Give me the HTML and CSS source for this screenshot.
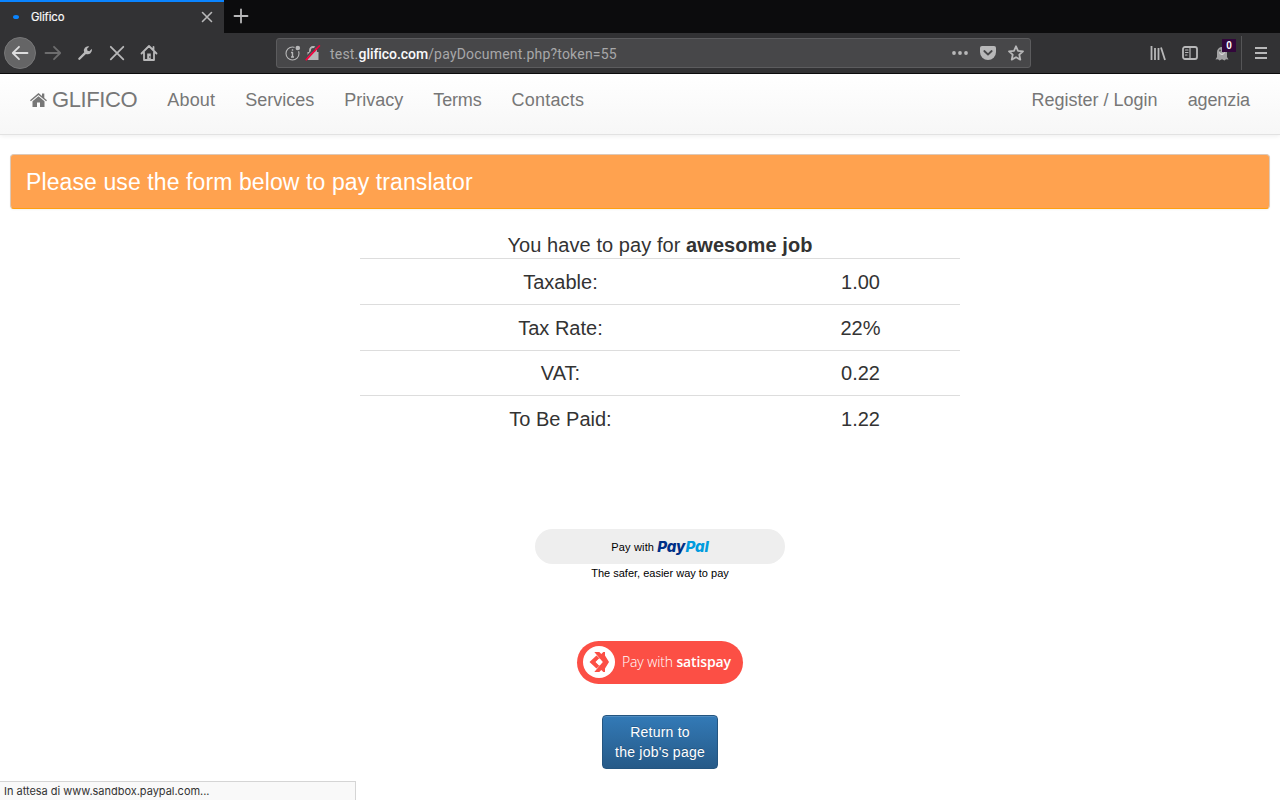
FILE: index.html
```html
<!DOCTYPE html>
<html lang="it">
<head>
<meta charset="utf-8">
<title>Glifico</title>
<link rel="stylesheet" href="styles.css">
</head>
<body>
<header class="browser">
  <div class="tabs">
    <div class="tab">
      <span class="loader"></span>
      <span class="tab-title">Glifico</span>
      <svg class="tab-close" width="12" height="12" viewBox="0 0 12 12"><path d="M1.5 1.5l9 9m0-9l-9 9"/></svg>
    </div>
    <svg class="tab-new" width="16" height="16" viewBox="0 0 16 16"><path d="M8 1.500v13M1.500 8h13"/></svg>
  </div>
  <div class="toolbar">
    <div class="tools">
      <span class="back"><svg width="18" height="18" viewBox="0 0 18 18"><path d="M16.500 9H2M8 2.800L1.800 9 8 15.200"/></svg></span>
      <svg class="dim" width="18" height="18" viewBox="0 0 18 18"><path d="M1.500 9H16M10 2.800L16.200 9 10 15.200"/></svg>
      <svg width="16" height="16" viewBox="0 0 16 16"><path class="fill" d="M1.300 13.200l5.900-5.900A4.300 4.300 0 0 1 12.300 1.400L10 3.800l.5 1.900 1.900.5 2.400-2.400a4.300 4.300 0 0 1-5.900 5.100l-6 5.900a1.200 1.200 0 0 1-1.600-1.600z"/></svg>
      <svg width="16" height="16" viewBox="0 0 16 16"><path d="M1.800 1.800l12.500 12.500m0-12.500L1.800 14.300"/></svg>
      <svg width="18" height="18" viewBox="0 0 18 18"><path d="M1.500 9.500L9 2l7.500 7.500M4 8.500V16h10V8.500M13.500 3v3"/><path class="fill" d="M7.200 9.500h3.600V16H7.200z"/><circle class="hub" cx="9.800" cy="13" r=".8"/></svg>
    </div>
    <div class="address">
      <svg width="16" height="16" viewBox="0 0 16 16"><circle class="ring" cx="7.500" cy="8.500" r="6.500"/><circle class="gap" cx="12.800" cy="3" r="3.400"/><circle class="fill" cx="12.800" cy="3" r="2.300"/><path class="letter" d="M6 7.500h1.500V12M6 12h3M7.500 4.300v1.400"/></svg>
      <svg width="16" height="16" viewBox="0 0 16 16"><path d="M5 8V5a3 3 0 0 1 6 0v3"/><path class="fill" d="M2.500 7H13.500v8h-11z"/><path class="dark" d="M0 13.500L13 0"/><path class="red" d="M1.300 14.700L14.300 1"/></svg>
      <span class="url">test.<b>glifico.com</b>/payDocument.php?token=55</span>
      <div class="page-actions">
        <svg width="16" height="16" viewBox="0 0 16 16"><g class="fill"><circle cx="2" cy="8" r="1.900"/><circle cx="8" cy="8" r="1.900"/><circle cx="14" cy="8" r="1.900"/></g></svg>
        <svg width="16" height="16" viewBox="0 0 16 16"><path class="fill" d="M2 1h12a2 2 0 0 1 2 2v4a8 8 0 0 1-16 0V3a2 2 0 0 1 2-2z"/><path class="pocket" d="M4.300 6L8 9.500 11.700 6"/></svg>
        <svg width="16" height="16" viewBox="0 0 16 16"><path d="M8 1.300l2 4.500 5 .5-3.700 3.400 1 4.900L8 12.200l-4.300 2.400 1-4.900L1 6.300l5-.5z"/></svg>
      </div>
    </div>
    <div class="extras">
      <svg width="16" height="16" viewBox="0 0 16 16"><path class="books" d="M1.500 1v14M5 3v12M8.500 3v12M11 2.500l4 12.500"/></svg>
      <svg width="16" height="16" viewBox="0 0 16 16"><rect x="1" y="2" width="14" height="12" rx="2"/><path class="thin" d="M8 2v12"/><path class="thin" d="M3.500 5h2.500M3.500 7.500h2.500M3.500 10h1.500"/></svg>
      <div class="ghost">
        <svg width="14" height="16" viewBox="0 0 14 16"><path class="ghost-body" d="M2 12V7a5 5 0 0 1 10 0v5l1.500 2.500-2.500-.3-1.500 1.300L7 14.200l-2.500 1.300L3 14.200l-2.500.3z"/><circle cx="5" cy="5.500" r="1" class="eye"/><circle cx="9" cy="5.500" r="1" class="eye"/><path class="smile" d="M4.500 8q2.500 3 5 0"/></svg>
        <span class="badge">0</span>
      </div>
      <span class="divider"></span>
      <svg class="menu" width="12" height="14" viewBox="0 0 12 14"><path d="M0 2h12M0 7h12M0 12h12"/></svg>
    </div>
  </div>
</header>
<nav class="nav">
  <a class="brand"><svg width="17" height="14" viewBox="0 0 17 14"><path d="M0 7.200L8.500 0 12 3V.5h2.300v4.400L17 7.200l-.9 1L8.500 2 .9 8.200z"/><path d="M2.500 8.200l6-4.900 6 4.900V14H10V9.500H7V14H2.500z"/></svg><span>GLIFICO</span></a>
  <a class="wide">About</a><a>Services</a><a>Privacy</a><a class="tight">Terms</a><a class="wide">Contacts</a>
  <a class="login">Register / Login</a><a class="agency">agenzia</a>
</nav>
<main>
  <div class="notice">Please use the form below to pay translator</div>
  <section class="payment">
    <p class="lead">You have to pay for <b>awesome job</b></p>
    <table class="amounts">
      <tr><td>Taxable:</td><td>1.00</td></tr>
      <tr><td>Tax Rate:</td><td>22%</td></tr>
      <tr class="short"><td>VAT:</td><td>0.22</td></tr>
      <tr><td>To Be Paid:</td><td>1.22</td></tr>
    </table>
    <button class="paypal"><span class="pay-label">Pay with</span><b class="logo">Pay<i>Pal</i></b></button>
    <p class="tagline">The safer, easier way to pay</p>
    <button class="satispay">
      <svg width="32" height="32" viewBox="0 0 32 32"><circle cx="16" cy="16" r="16"/><path d="M13.500 9.500L16.700 12.500 13 16l3.700 3.500-3.200 3L6.500 16z"/><path d="M11.300 6h5l2 2 2-2h1.700v3.500L26 16l-4 6.500V26h-1.700l-2-2-2 2h-5l8.500-10z"/><path class="hole" d="M16 12.500l3.500 3.500-3.500 3.500-3.500-3.500z"/></svg>
      <span class="satis-label">Pay with <b>satispay</b></span>
    </button>
    <button class="return">Return to<br>the job's page</button>
  </section>
</main>
<footer class="status">In attesa di www.sandbox.paypal.com...</footer>
</body>
</html>
```
FILE: styles.css
```css
* { box-sizing: border-box; }
body { margin: 0; height: 800px; overflow: hidden; background: #fff; color: #333; font-family: "Liberation Sans", Arial, sans-serif; }
button { border: 0; padding: 0; font-family: inherit; }
p { margin: 0; }
svg { flex: none; display: block; }
.browser { height: 74px; background: #323234; border-bottom: 1px solid #0c0c0d; color: #f9f9fa; }
.browser svg { fill: none; stroke: #b8b8b9; stroke-width: 1.800; stroke-linecap: round; stroke-linejoin: round; }
.browser .fill { fill: #b8b8b9; stroke: none; }
.browser .thin { stroke-width: 1.200; }
.browser .hub { fill: #323234; stroke: none; }
.browser .ring { stroke-width: 1.100; }
.browser .gap { fill: #474749; stroke: none; }
.browser .letter { stroke-width: 1.400; stroke-linecap: butt; }
.tabs { height: 33px; display: flex; background: #0c0c0d; }
.tab { width: 224px; display: flex; align-items: center; border-top: 2px solid #0a84ff; background: #323234; padding: 0 11px 0 13px; }
.loader { width: 6px; height: 4px; margin-top: -2px; border-radius: 50%; background: #0a84ff; }
.tab-title { margin: -2px 0 0 12px; font: 11.300px Inter, sans-serif; letter-spacing: -.1px; -webkit-text-stroke: .2px; }
.tab-close { margin: -1px 0 0 auto; }
.browser .tab-close { stroke-width: 1.600; }
.tab-new { margin: 8px 0 0 9px; }
.toolbar { height: 40px; display: flex; align-items: center; }
.tools { width: 276px; display: flex; align-items: center; padding-left: 4px; }
.back { width: 32px; height: 32px; margin-right: 8px; border-radius: 50%; background: #656566; border: 1px solid #777778; display: grid; place-items: center; }
.back svg { stroke: #dededf; }
.tools > svg { margin-right: 16px; }
.tools > .dim { margin-right: 15px; }
.tools > svg:nth-child(4) { margin-right: 15px; }
.browser .dim { stroke: #6d6d6e; }
.address { width: 755px; height: 30px; display: flex; align-items: center; border: 1px solid #5c5c5e; border-radius: 3px; background: #474749; padding: 0 6px 0 8px; gap: 4px; }
.browser .red { stroke: #f3003e; stroke-width: 1.800; }
.browser .dark { stroke: #474749; }
.url { margin: 1px 0 0 5px; font: 14px/20px Roboto, sans-serif; color: #a8a8a9; letter-spacing: .2px; }
.url b { color: #f9f9fa; font-weight: 500; letter-spacing: -.05px; }
.page-actions { display: flex; gap: 12px; margin-left: auto; }
.browser .pocket { stroke: #474749; }
.extras { flex: 1; display: flex; align-items: center; padding-left: 119px; }
.extras > svg:nth-child(2) { margin-left: 16px; }
.browser .books { stroke-linecap: butt; }
.ghost { position: relative; margin-left: 17px; }
.browser .ghost-body { fill: #a2a2a3; stroke: none; }
.browser .eye { fill: #555; stroke: none; }
.browser .smile { stroke: #eee; stroke-width: 1; }
.badge { position: absolute; left: 7px; top: -6px; width: 14px; height: 13px; background: #32063b; color: #fff; font: bold 10px/13px "Liberation Sans", sans-serif; text-align: center; }
.divider { width: 1px; height: 34px; margin-left: 12px; background: #555557; }
.extras .menu { margin-left: 13px; stroke-linecap: butt; stroke-width: 2; }
.nav { height: 61px; padding: 0 30px 8px; display: flex; align-items: center; gap: 30px; color: #777; font-size: 18px; border-bottom: 1px solid #e2e2e2; background: linear-gradient(#fff, #f7f7f7); box-shadow: 0 1px 5px rgba(0,0,0,.075); }
.nav a { white-space: nowrap; }
.nav .brand { display: flex; align-items: center; gap: 5px; font-size: 22px; letter-spacing: -.4px; margin-top: -1px; }
.brand svg { fill: #777; margin-top: 1px; }
.wide { letter-spacing: .2px; }
.tight { letter-spacing: -.15px; }
.nav .login { margin-left: auto; }
.agency { letter-spacing: -.1px; }
.notice { margin: 19px 10px 0; height: 56px; padding: 1px 15px 0; display: flex; align-items: center; color: #fff; font-size: 23px; letter-spacing: .1px; background: #ffa24f; border: 1px solid #ddc8b7; border-bottom: 1px solid #ff9f10; border-radius: 4px; box-shadow: 0 1px 2px rgba(0,0,0,.05); }
.notice { height: 55px; margin-bottom: 25px; }
.payment { margin: 0 0 0 360px; width: 600px; display: flex; flex-direction: column; align-items: center; }
.lead { height: 24px; line-height: 22px; font-size: 20px; letter-spacing: .07px; }
.amounts { width: 600px; table-layout: fixed; border-collapse: collapse; font-size: 20px; text-align: center; }
.amounts tr { height: 46px; }
.amounts .short { height: 45px; }
.amounts td { padding: 2px 0 0 1px; border-top: 1px solid #ddd; }
.amounts .short td { padding-top: 0; }
.amounts td:first-child { width: 400px; }
.paypal { width: 250px; height: 35px; margin-top: 87px; border-radius: 18px; background: #eee; color: #000; display: flex; align-items: center; justify-content: center; gap: 3px; font-size: 11px; }
.pay-label { padding-top: 1px; letter-spacing: .18px; }
.logo { font: italic 800 15px Inter, sans-serif; letter-spacing: 0; color: #003087; }
.logo i { color: #009cde; }
.tagline { color: #000; height: 18px; line-height: 18px; font-size: 11px; }
.satispay { width: 166px; height: 43px; margin-top: 59px; border-radius: 22px; background: #fc4f45; color: #fff; display: flex; align-items: center; gap: 7px; padding-left: 6px; font: 300 14px "Open Sans", sans-serif; }
.satispay svg { fill: #fff; }
.satispay path { fill: #fc4f45; }
.satispay .hole { fill: #fff; }
.satis-label { margin-top: -1px; letter-spacing: -.13px; }
.satis-label b { font-weight: 600; }
.return { width: 116px; height: 54px; margin-top: 31px; border: 1px solid #245580; border-radius: 4px; background: linear-gradient(#337ab7, #265a88); color: #fff; font-size: 14px; line-height: 20px; letter-spacing: .22px; text-shadow: 0 -1px rgba(0,0,0,.2); box-shadow: inset 0 1px rgba(255,255,255,.15); }
.status { position: absolute; left: 0; top: 781px; width: 356px; height: 19px; padding-left: 4px; border: solid #d5d5d5; border-width: 1px 1px 0 0; background: #f9f9f9; color: #333; font: 11px/19px Inter, sans-serif; letter-spacing: -.02px; }
```
